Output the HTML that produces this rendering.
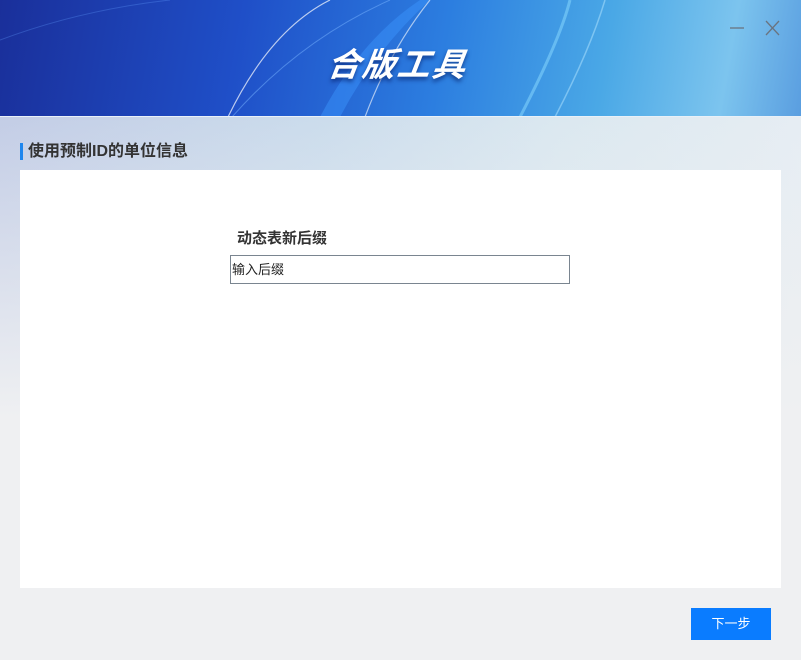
<!DOCTYPE html>
<html><head><meta charset="utf-8"><style>
*{margin:0;padding:0;box-sizing:border-box}
body{width:801px;height:660px;overflow:hidden;font-family:"Liberation Sans","Noto Sans CJK SC",sans-serif;background:#eff0f2;position:relative}
.bg{position:absolute;left:0;top:117px;width:801px;height:543px;background:linear-gradient(180deg,rgba(255,255,255,0) 0px,rgba(239,240,242,1) 300px),linear-gradient(90deg,#c3cde6,#cbdcec 40%,#dbe8f0 70%,#e6edf3)}
.hdr{position:absolute;left:0;top:0;width:801px;height:117px;background:linear-gradient(100deg,#1a2f9a 0%,#1f4fc8 30%,#2c7ee0 55%,#4aa8e6 75%,#7cc4ee 90%,#5a9ee0 100%);overflow:hidden;border-bottom:1px solid #e8f0f8}
.title{position:absolute;left:328px;top:38px;font-size:33px;font-weight:bold;font-style:italic;color:#fff;letter-spacing:2px;text-shadow:0 3px 4px rgba(0,20,90,.6);transform:skewX(-8deg)}
.sec{position:absolute;left:20px;top:143px;font-size:16px;font-weight:bold;color:#333;padding-left:5px;border-left:3px solid #1f86ee;line-height:17px}
.panel{position:absolute;left:20px;top:170px;width:761px;height:418px;background:#fff}
.lbl{position:absolute;left:237px;top:227px;font-size:15px;font-weight:bold;color:#333}
.inp{position:absolute;left:230px;top:255px;width:340px;height:29px;border:1px solid #7a8590;font-size:13px;color:#222;line-height:28px;padding-left:1px}
.btn{position:absolute;left:691px;top:608px;width:80px;height:32px;background:#0a7cff;color:#fff;font-size:13px;text-align:center;line-height:32px}
</style></head><body>
<div class="bg"></div>
<div class="hdr">
<svg width="801" height="117" style="position:absolute;left:0;top:0">
<path d="M228 117 Q270 30 330 0" stroke="rgba(255,255,255,.7)" stroke-width="1.2" fill="none"/>
<path d="M232 117 Q300 40 390 0" stroke="rgba(120,180,255,.5)" stroke-width="1" fill="none"/>
<path d="M320 117 Q360 40 420 0 L430 0 Q375 50 340 117Z" fill="rgba(60,150,255,.45)"/>
<path d="M365 117 Q390 50 430 0" stroke="rgba(255,255,255,.6)" stroke-width="1.2" fill="none"/>
<path d="M520 117 Q560 40 570 0" stroke="rgba(140,220,255,.5)" stroke-width="3" fill="none"/>
<path d="M555 117 Q590 50 605 0" stroke="rgba(180,230,255,.5)" stroke-width="1.5" fill="none"/>
<path d="M0 40 Q80 10 170 0" stroke="rgba(100,160,255,.3)" stroke-width="1" fill="none"/>
</svg>
<div class="title">合版工具</div>
<svg width="60" height="30" style="position:absolute;left:725px;top:15px">
<line x1="5" y1="13" x2="19" y2="13" stroke="#6a7480" stroke-width="1.3"/>
<line x1="41" y1="6" x2="54" y2="20" stroke="#6a7480" stroke-width="1.3"/>
<line x1="54" y1="6" x2="41" y2="20" stroke="#6a7480" stroke-width="1.3"/>
</svg>
</div>
<div class="sec">使用预制ID的单位信息</div>
<div class="panel"></div>
<div class="lbl">动态表新后缀</div>
<div class="inp">输入后缀</div>
<div class="btn">下一步</div>
</body></html>
